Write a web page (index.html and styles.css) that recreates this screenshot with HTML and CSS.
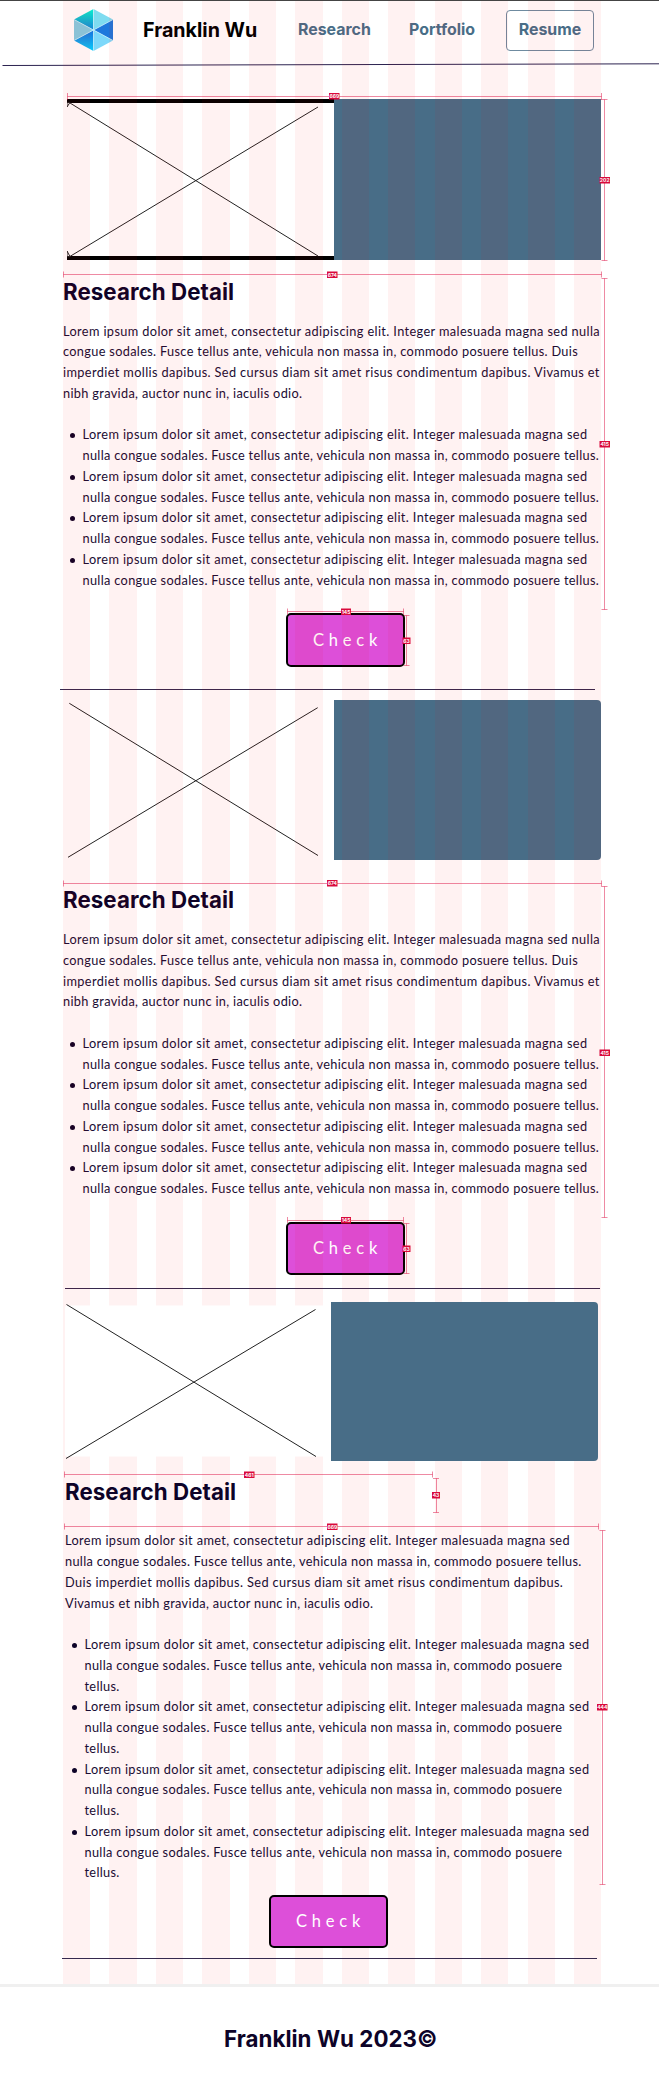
FILE: index.html
```html
<!DOCTYPE html>
<html lang="en">
<head>
<meta charset="utf-8">
<title>Franklin Wu – Research</title>
<link rel="stylesheet" href="styles.css">
</head>
<body>
<div class="page">
  <header class="header">
    <svg class="logo" viewBox="0 0 39 42" width="39" height="42">
      <defs>
        <linearGradient id="g1" x1="0" y1="0" x2="0" y2="1"><stop offset="0" stop-color="#07f0cd"/><stop offset="1" stop-color="#1784d8"/></linearGradient>
        <linearGradient id="g2" x1="0" y1="0" x2="0" y2="1"><stop offset="0" stop-color="#1a6fdc"/><stop offset="1" stop-color="#06cdfb"/></linearGradient>
      </defs>
      <path fill="url(#g1)" d="M19.5 0V21L0 10.500z"/>
      <path fill="#7edcf0" d="M19.5 0L39 10.500L19.500 21z"/>
      <path fill="#1e78dc" d="M39 10.500V31.500L19.500 21z"/>
      <path fill="#7dd8fa" d="M39 31.500L19.500 42V21z"/>
      <path fill="url(#g2)" d="M19.500 42L0 31.500L19.500 21z"/>
      <path fill="#85cde2" d="M0 31.500V10.500L19.500 21z"/>
      <path stroke="#c4eefa" stroke-width=".8" fill="none" d="M19.500 0V42M0 10.500L39 31.500M39 10.500L0 31.500"/>
    </svg>
    <span class="brand">Franklin Wu</span>
    <nav class="nav">
      <a class="nav-link research">Research</a>
      <a class="nav-link portfolio">Portfolio</a>
      <a class="nav-link resume">Resume</a>
    </nav>
    <svg class="header-rule" viewBox="0 0 659 4" width="659" height="4"><path d="M2.500 2.500L659 .8" stroke="#2c2350" stroke-width="1"/></svg>
  </header>

  <article class="entry first">
    <div class="media framed">
      <svg class="cross" viewBox="0 0 267 161" width="267" height="161"><path d="M3 4L251 157M2 158L251 8M0 3.400h3L0 8zM0 157.600h3L0 152z"/></svg>
      <div class="panel"></div>
    </div>
    <h2>Research Detail</h2>
    <p><span class="wide">Lorem ipsum dolor sit amet, consectetur adipiscing elit. Integer malesuada magna sed nulla</span><br>congue sodales. Fusce tellus ante, vehicula non massa in, commodo posuere tellus. Duis<br><span class="wide">imperdiet mollis dapibus. Sed cursus diam sit amet risus condimentum dapibus. Vivamus et</span><br>nibh gravida, auctor nunc in, iaculis odio.</p>
    <ul>
      <li><span class="wide">Lorem ipsum dolor sit amet, consectetur adipiscing elit. Integer malesuada magna sed</span><br>nulla congue sodales. Fusce tellus ante, vehicula non massa in, commodo posuere tellus.</li>
      <li><span class="wide">Lorem ipsum dolor sit amet, consectetur adipiscing elit. Integer malesuada magna sed</span><br>nulla congue sodales. Fusce tellus ante, vehicula non massa in, commodo posuere tellus.</li>
      <li><span class="wide">Lorem ipsum dolor sit amet, consectetur adipiscing elit. Integer malesuada magna sed</span><br>nulla congue sodales. Fusce tellus ante, vehicula non massa in, commodo posuere tellus.</li>
      <li><span class="wide">Lorem ipsum dolor sit amet, consectetur adipiscing elit. Integer malesuada magna sed</span><br>nulla congue sodales. Fusce tellus ante, vehicula non massa in, commodo posuere tellus.</li>
    </ul>
    <button class="check">Check</button>
    <div class="rule"></div>
  </article>

  <article class="entry second">
    <div class="media">
      <svg class="cross" viewBox="0 0 267 160" width="267" height="160"><path d="M2.300 3.300L251 155.500M1 157.300L250.700 7.700"/></svg>
      <div class="panel"></div>
    </div>
    <h2>Research Detail</h2>
    <p><span class="wide">Lorem ipsum dolor sit amet, consectetur adipiscing elit. Integer malesuada magna sed nulla</span><br>congue sodales. Fusce tellus ante, vehicula non massa in, commodo posuere tellus. Duis<br><span class="wide">imperdiet mollis dapibus. Sed cursus diam sit amet risus condimentum dapibus. Vivamus et</span><br>nibh gravida, auctor nunc in, iaculis odio.</p>
    <ul>
      <li><span class="wide">Lorem ipsum dolor sit amet, consectetur adipiscing elit. Integer malesuada magna sed</span><br>nulla congue sodales. Fusce tellus ante, vehicula non massa in, commodo posuere tellus.</li>
      <li><span class="wide">Lorem ipsum dolor sit amet, consectetur adipiscing elit. Integer malesuada magna sed</span><br>nulla congue sodales. Fusce tellus ante, vehicula non massa in, commodo posuere tellus.</li>
      <li><span class="wide">Lorem ipsum dolor sit amet, consectetur adipiscing elit. Integer malesuada magna sed</span><br>nulla congue sodales. Fusce tellus ante, vehicula non massa in, commodo posuere tellus.</li>
      <li><span class="wide">Lorem ipsum dolor sit amet, consectetur adipiscing elit. Integer malesuada magna sed</span><br>nulla congue sodales. Fusce tellus ante, vehicula non massa in, commodo posuere tellus.</li>
    </ul>
    <button class="check">Check</button>
    <div class="rule"></div>
  </article>

  <article class="entry third">
    <div class="media">
      <svg class="cross" viewBox="0 0 266 159" width="266" height="159"><rect y="3.500" width="266" height="151" rx="2"/><path d="M1.500 2.500L251 154.500M1 156.500L250.500 7.500"/></svg>
      <div class="panel"></div>
    </div>
    <h2>Research Detail</h2>
    <p><span class="wide">Lorem ipsum dolor sit amet, consectetur adipiscing elit. Integer malesuada magna sed</span><br>nulla congue sodales. Fusce tellus ante, vehicula non massa in, commodo posuere tellus.<br><span class="wide">Duis imperdiet mollis dapibus. Sed cursus diam sit amet risus condimentum dapibus.</span><br>Vivamus et nibh gravida, auctor nunc in, iaculis odio.</p>
    <ul>
      <li><span class="wide">Lorem ipsum dolor sit amet, consectetur adipiscing elit. Integer malesuada magna sed</span><br>nulla congue sodales. Fusce tellus ante, vehicula non massa in, commodo posuere<br>tellus.</li>
      <li><span class="wide">Lorem ipsum dolor sit amet, consectetur adipiscing elit. Integer malesuada magna sed</span><br>nulla congue sodales. Fusce tellus ante, vehicula non massa in, commodo posuere<br>tellus.</li>
      <li><span class="wide">Lorem ipsum dolor sit amet, consectetur adipiscing elit. Integer malesuada magna sed</span><br>nulla congue sodales. Fusce tellus ante, vehicula non massa in, commodo posuere<br>tellus.</li>
      <li><span class="wide">Lorem ipsum dolor sit amet, consectetur adipiscing elit. Integer malesuada magna sed</span><br>nulla congue sodales. Fusce tellus ante, vehicula non massa in, commodo posuere<br>tellus.</li>
    </ul>
    <button class="check">Check</button>
    <div class="rule"></div>
  </article>

  <footer class="footer">Franklin Wu 2023©</footer>

  <div class="columns"><i></i><i></i><i></i><i></i><i></i><i></i><i></i><i></i><i></i><i></i><i></i><i></i></div>

  <svg class="measures" viewBox="0 0 659 2082" width="659" height="2082">
    <g class="m-lines">
      <path d="M67.500 96.500H601.500M67.500 93v7M601.500 93v7"/>
      <path d="M604.500 99.500V260.500M601.500 99.500h6M601.500 260.500h6"/>
      <path d="M63.500 274.500H601.500M63.500 271.500v6M601.500 271.500v6"/>
      <path d="M604.500 278.500V609.500M601.500 278.500h6M601.500 609.500h6"/>
      <path d="M287.500 611.500H403.500M287.500 608.500v6M403.500 608.500v6"/>
      <path d="M406.500 615.500V665.500M404 615.500h5.500M404 665.500h5.500"/>
      <path d="M63.500 883.500H601.500M63.500 880.500v6M601.500 880.500v6"/>
      <path d="M604.500 886.500V1217.500M601.500 886.500h6M601.500 1217.500h6"/>
      <path d="M287.500 1220.500H403.500M287.500 1217v6M403.500 1217v6"/>
      <path d="M406.500 1223.500V1273.500M404 1223.500h5.500M404 1273.500h5.500"/>
      <path d="M64.500 1474.500H432.500M64.500 1471.500v6M432.500 1471.500v6"/>
      <path d="M436.500 1478.500V1512.500M433 1478.500h6M433 1512.500h6"/>
      <path d="M64.500 1526.500H598.500M64.500 1523.500v6M598.500 1523.500v6"/>
      <path d="M602.500 1530.500V1884.500M599.500 1530.500h6M599.500 1884.500h6"/>
    </g>
    <g class="m-tags">
      <path d="M329 93h10.500v6.500H329zM599.500 177h10.500v6.500h-10.500zM327 271.500h10.500v6.500H327zM599.500 441h10.500v6.500h-10.500zM341 608.500h10v6.500h-10zM402.500 637.500h8v6.500h-8zM327 880h10.500v6.500H327zM599.500 1049.500h10.500v6.500h-10.500zM341 1217h10v6.500h-10zM402.500 1245.500h8v6.500h-8zM244 1471.500h10.500v6.500H244zM432 1492h8v6.500h-8zM327 1523.500h10.500v6.500H327zM597 1704h10.500v6.500H597z"/>
    </g>
    <g class="m-text">
      <text x="334.300" y="98.200">669</text><text x="604.700" y="182.200">202</text><text x="332.300" y="276.700">674</text><text x="604.700" y="446.200">415</text>
      <text x="346" y="613.700">145</text><text x="406.500" y="642.700">63</text><text x="332.300" y="885.200">674</text><text x="604.700" y="1054.700">415</text>
      <text x="346" y="1222.200">145</text><text x="406.500" y="1250.700">63</text><text x="249.200" y="1476.700">461</text><text x="436" y="1497.200">43</text>
      <text x="332.300" y="1528.700">669</text><text x="602.300" y="1709.200">444</text>
    </g>
  </svg>
</div>
</body>
</html>
```
FILE: styles.css
```css
* { box-sizing: border-box; }
body { margin: 0; background: #fff; }
.page {
  position: relative;
  width: 659px;
  height: 2082px;
  overflow: hidden;
  font-family: Lato, "Open Sans", sans-serif;
  color: #1a0c33;
}

/* header */
.header {
  position: relative;
  display: flex;
  align-items: flex-start;
  height: 66px;
  border-top: 1px solid #444;
  font-family: Inter, sans-serif;
  padding-left: 74px;
}
.logo { margin-top: 8px; flex: none; }
.brand {
  margin: 15px 0 0 30px;
  width: 154px;
  font-size: 19.700px;
  font-weight: 700;
  line-height: 28px;
  color: #000;
  white-space: nowrap;
}
.nav { display: flex; padding-top: 8.500px; }
.nav-link {
  font-size: 15.900px;
  font-weight: 700;
  line-height: 39px;
  color: #486d87;
}
.research { width: 111px; margin-left: 1px; }
.portfolio { width: 97px; }
.resume {
  width: 88px;
  height: 41px;
  border: 1px solid #6f8ba0;
  border-radius: 4px;
  text-align: center;
  line-height: 37px;
}
.header-rule { position: absolute; left: 0; top: 62px; }

/* entries */
.entry { display: flex; flex-direction: column; padding-left: 63px; }
.media { display: flex; margin-left: 4px; height: 160px; flex: none; }
.cross { flex: none; fill: none; stroke: #222; stroke-width: 1; }
.panel { width: 267px; background: #486d87; border-radius: 0 4px 4px 0; }
.first { padding-top: 33px; }
.first .media { height: 161px; }
.framed { background: linear-gradient(#000 3.500px, transparent 3.500px, transparent 157.500px, #000 157.500px) 0 0 / 267px 100% no-repeat; }
.framed .panel { border-radius: 0; }
.entry h2 {
  margin: 17.500px 0 16.200px;
  font: 700 22.300px/27px Inter, sans-serif;
  letter-spacing: .07px;
  color: #0d0328;
}
.entry p, .entry ul {
  margin: 0;
  font-size: 12.750px;
  line-height: 20.750px;
  letter-spacing: .325px;
  white-space: nowrap;
}
.wide { letter-spacing: .375px; }
.entry ul { list-style: none; margin-top: 20.750px; padding-left: 19.500px; }
.entry li { position: relative; }
.entry li::before {
  content: "";
  position: absolute;
  left: -12.500px;
  top: 9px;
  width: 5px;
  height: 5px;
  border-radius: 50%;
  background: #0d0328;
}
.check {
  align-self: flex-start;
  width: 119px;
  height: 53.500px;
  margin: 23px 0 22px 223px;
  padding: 0 0 0 4px;
  border: 2px solid #000;
  border-radius: 5px;
  background: #dd4fd9;
  color: #fff;
  font: 400 16.500px/1 Lato, sans-serif;
  letter-spacing: 4.800px;
}
.rule { width: 535px; height: 1px; margin-left: -3px; background: #35294e; }

.second { padding-top: 10px; }
.second h2 { margin-top: 26px; }
.second .check { margin-bottom: 13px; }
.second .rule { margin-left: 2px; }

.third { padding: 12.500px 0 0 65px; }
.third > * { position: relative; z-index: 2; }
.third .media { height: 159px; margin-left: 0; }
.third .cross rect { fill: #fff; stroke: none; }
.third h2 { margin: 17.200px 0 25.200px; }
.third .check { margin: 11.500px 0 10px 204px; }
.third .rule { margin-left: -3px; }

/* footer */
.footer {
  margin-top: 25px;
  height: 98px;
  border-top: 3px solid #f0f0f0;
  padding: 36.500px 0 0 224px;
  font: 700 22.300px/30px Inter, sans-serif;
  letter-spacing: .05px;
  color: #0d0328;
}

/* design column overlay */
.columns {
  position: absolute;
  z-index: 1;
  left: 63px;
  top: 1px;
  width: 538.500px;
  height: 1982.500px;
  display: grid;
  grid-template-columns: repeat(12, 27.200px);
  justify-content: space-between;
}
.columns i { background: rgba(255, 0, 0, .052); }

/* dimension annotations */
.measures { position: absolute; left: 0; top: 0; z-index: 3; }
.m-lines { fill: none; stroke: #dc0a3f; stroke-opacity: .48; }
.m-tags { fill: #d90a3c; }
.m-text { fill: #fff; font: 700 5px Inter, sans-serif; text-anchor: middle; }
```
